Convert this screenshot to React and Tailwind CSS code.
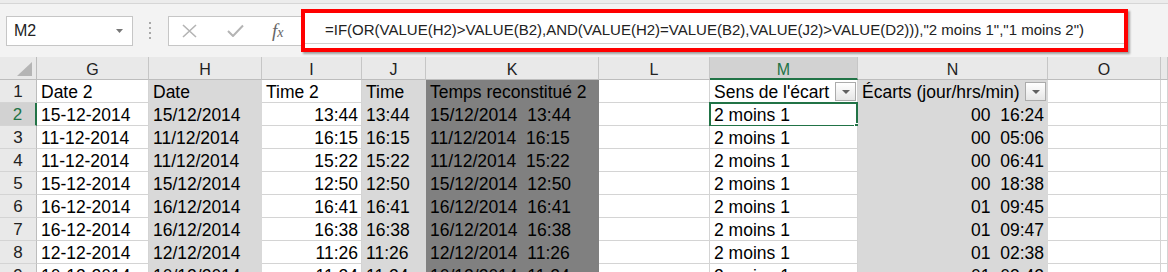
import React from "react";

// column letters, fill and alignment for G..P
const columns = [
  { letter: "G", fill: "white", align: "left" },
  { letter: "H", fill: "light", align: "left" },
  { letter: "I", fill: "white", align: "right" },
  { letter: "J", fill: "light", align: "left" },
  { letter: "K", fill: "dark", align: "left" },
  { letter: "L", fill: "white", align: "left" },
  { letter: "M", fill: "white", align: "left" },
  { letter: "N", fill: "light", align: "right" },
  { letter: "O", fill: "white", align: "left" },
  { letter: "", fill: "white", align: "left" },
];

const headerRow = ["Date 2", "Date", "Time 2", "Time", "Temps reconstitué 2", "", "Sens de l'écart", "Écarts (jour/hrs/min)", "", ""];

const rows = [
  ["15-12-2014", "15/12/2014", "13:44", "13:44", "15/12/2014  13:44", "", "2 moins 1", "00  16:24", "", ""],
  ["11-12-2014", "11/12/2014", "16:15", "16:15", "11/12/2014  16:15", "", "2 moins 1", "00  05:06", "", ""],
  ["11-12-2014", "11/12/2014", "15:22", "15:22", "11/12/2014  15:22", "", "2 moins 1", "00  06:41", "", ""],
  ["15-12-2014", "15/12/2014", "12:50", "12:50", "15/12/2014  12:50", "", "2 moins 1", "00  18:38", "", ""],
  ["16-12-2014", "16/12/2014", "16:41", "16:41", "16/12/2014  16:41", "", "2 moins 1", "01  09:45", "", ""],
  ["16-12-2014", "16/12/2014", "16:38", "16:38", "16/12/2014  16:38", "", "2 moins 1", "01  09:47", "", ""],
  ["12-12-2014", "12/12/2014", "11:26", "11:26", "12/12/2014  11:26", "", "2 moins 1", "01  02:38", "", ""],
  ["10-12-2014", "10/12/2014", "11:24", "11:24", "10/12/2014  11:24", "", "2 moins 1", "01  03:42", "", ""],
];

const fillClass = {
  white: "bg-white border-[#d4d4d4]",
  light: "bg-[#d9d9d9] border-[#d9d9d9]",
  dark: "bg-[#808080] border-[#808080]",
};

function FilterButton() {
  return (
    <div className="mt-[2px] mr-[1px] flex h-[19px] w-[21px] shrink-0 items-center justify-center border border-[#ababab] bg-gradient-to-b from-white to-[#e6e6e6]">
      <svg width="8" height="4" viewBox="0 0 8 4">
        <path d="M0 0 L8 0 L4 4 Z" fill="#606060" />
      </svg>
    </div>
  );
}

function Cell({ col, children, filter, selected, header }) {
  const align = col.align === "right" && !header ? "text-right pr-[3px]" : "text-left pl-[4px]";
  return (
    <div className={`relative h-[23px] border-r border-b ${fillClass[col.fill]}`}>
      {filter ? (
        <div className="flex h-full items-start justify-between pl-[4px]">
          <span className="whitespace-pre leading-[24px]">{children}</span>
          <FilterButton />
        </div>
      ) : (
        <div className={`whitespace-pre leading-[24px] ${align}`}>{children}</div>
      )}
      {selected && (
        <div className="pointer-events-none absolute -top-[1px] -left-[1px] h-[25px] w-[149px] border-2 border-[#217346]">
          <div className="absolute -right-[4px] -bottom-[4px] h-[6px] w-[6px] border border-white bg-[#217346]" />
        </div>
      )}
    </div>
  );
}

function RowHeader({ n, active }) {
  return (
    <div
      className={`h-[23px] border-b border-[#d4d4d4] text-center text-[17px] leading-[24px] ${
        active ? "border-r-2 border-r-[#217346] bg-[#d2d2d2] text-[#217346]" : "border-r border-r-[#bdbdbd] bg-[#e9e9e9] text-[#222]"
      }`}
    >
      {n}
    </div>
  );
}

export default function App() {
  const formula = '=IF(OR(VALUE(H2)>VALUE(B2),AND(VALUE(H2)=VALUE(B2),VALUE(J2)>VALUE(D2))),"2 moins 1","1 moins 2")';

  return (
    <div className="h-[272px] w-[1168px] overflow-hidden bg-[#f3f3f3] font-['Liberation_Sans',Arial,sans-serif] text-black">
      {/* ribbon edge */}
      <div className="h-[4px] border-b border-[#d6d6d6] bg-[#ececec]" />

      {/* name box + formula bar */}
      <div className="flex h-[53px] items-center">
        <div className="ml-[6px] flex h-[30px] w-[127px] items-center justify-between border border-[#c6c6c6] bg-white pr-[9px] pl-[7px]">
          <span className="text-[16px] text-[#222]">M2</span>
          <svg width="7" height="4" viewBox="0 0 7 4">
            <path d="M0 0 L7 0 L3.5 4 Z" fill="#777" />
          </svg>
        </div>

        <div className="ml-[16px] flex w-[3px] flex-col gap-[3px]">
          <div className="h-[2px] w-[2px] bg-[#a8a8a8]" />
          <div className="h-[2px] w-[2px] bg-[#a8a8a8]" />
          <div className="h-[2px] w-[2px] bg-[#a8a8a8]" />
          <div className="h-[2px] w-[2px] bg-[#a8a8a8]" />
        </div>

        <div className="ml-[16px] flex h-[30px] w-[140px] items-center border border-[#c6c6c6] bg-white pl-[13px]">
          <svg width="15" height="14" viewBox="0 0 15 14">
            <path d="M1 1 L14 13 M14 1 L1 13" stroke="#b4b4b4" strokeWidth="1.6" fill="none" />
          </svg>
          <svg className="ml-[30px]" width="17" height="13" viewBox="0 0 17 13">
            <path d="M1 7 L6 12 L16 1.5" stroke="#b4b4b4" strokeWidth="2" fill="none" />
          </svg>
          <span className="ml-[28px] font-['Liberation_Serif',serif] text-[19px] italic leading-none text-[#666]">
            f<span className="text-[14px]">x</span>
          </span>
        </div>

        <div className="-ml-[7px] h-[43px] w-[827px] border-4 border-[#ff0000] bg-white shadow-[2px_2px_2px_rgba(0,0,0,0.35)]">
          <div className="flex h-[31px] items-center border-b border-[#d0d0d0] pt-[5px] pl-[20px] text-[15px] whitespace-nowrap text-[#222]">
            {formula}
          </div>
        </div>
      </div>

      {/* sheet */}
      <div className="grid grid-cols-[37px_112px_113px_100px_64px_173px_111px_148px_190px_113px_1fr] text-[17.5px]">
        {/* column headers */}
        <div className="flex h-[23px] items-end justify-end border-r border-b border-[#bdbdbd] bg-[#e9e9e9] pr-[4px] pb-[3px]">
          <svg width="15" height="14" viewBox="0 0 15 14">
            <path d="M15 0 L15 14 L0 14 Z" fill="#b5b5b5" />
          </svg>
        </div>
        {columns.map((c) =>
          c.letter === "M" ? (
            <div
              key="hM"
              className="h-[23px] border-r border-b-2 border-r-[#c6c6c6] border-b-[#217346] bg-[#d2d2d2] pt-[2px] text-center text-[16px] leading-[21px] text-[#217346]"
            >
              M
            </div>
          ) : (
            <div
              key={"h" + c.letter}
              className="h-[23px] border-r border-b border-r-[#c6c6c6] border-b-[#bdbdbd] bg-[#e9e9e9] pt-[2px] text-center text-[16px] leading-[21px] text-[#222]"
            >
              {c.letter}
            </div>
          )
        )}

        {/* row 1 */}
        <RowHeader n={1} />
        {columns.map((c, i) => (
          <Cell key={"r1" + i} col={c} header filter={i === 6 || i === 7}>
            {headerRow[i]}
          </Cell>
        ))}

        {/* data rows */}
        {rows.map((r, ri) => (
          <React.Fragment key={"row" + ri}>
            <RowHeader n={ri + 2} active={ri === 0} />
            {columns.map((c, i) => (
              <Cell key={ri + "-" + i} col={c} selected={ri === 0 && i === 6}>
                {r[i]}
              </Cell>
            ))}
          </React.Fragment>
        ))}
      </div>
    </div>
  );
}
